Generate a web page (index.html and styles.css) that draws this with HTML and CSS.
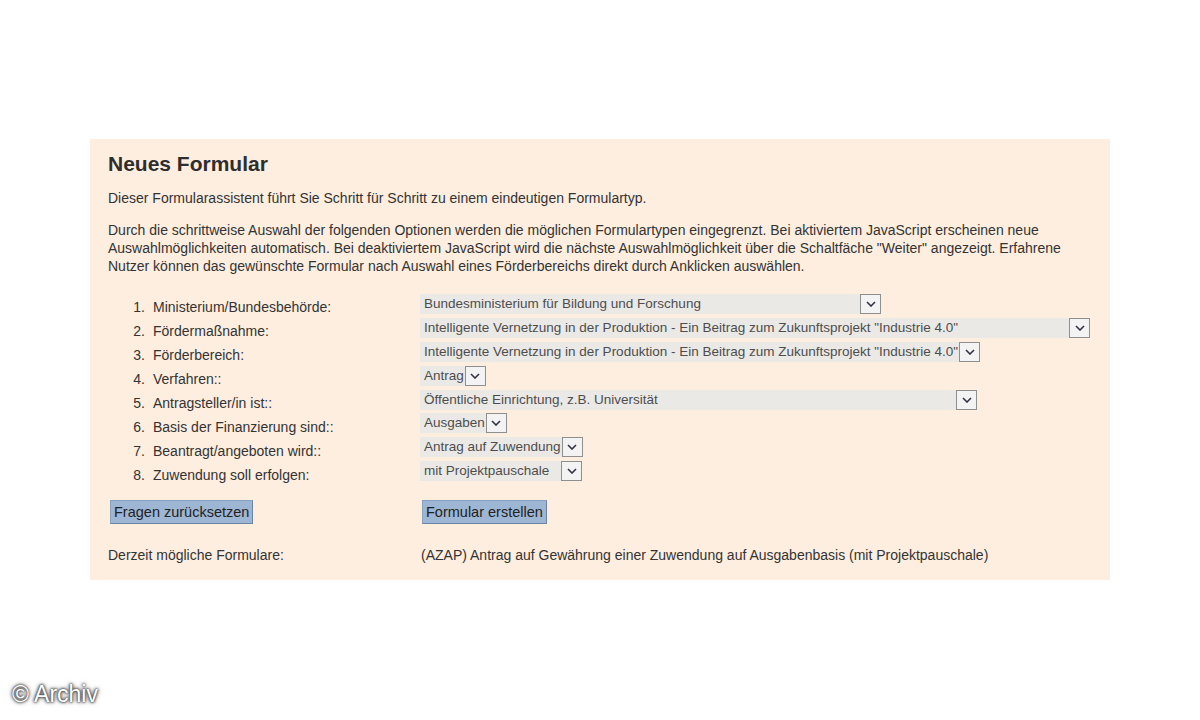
FILE: index.html
```html
<!DOCTYPE html>
<html lang="de">

<head>
    <meta charset="UTF-8" />
    <meta name="viewport" content="width=device-width, initial-scale=1.0" />
    <title>Neues Formular</title>
    <link rel="stylesheet" href="styles.css">
</head>

<body>
    <div class="panel">
        <h2>Neues Formular</h2>
        <p class="intro">Dieser Formularassistent führt Sie Schritt für Schritt zu einem eindeutigen Formulartyp.</p>
        <p class="info">Durch die schrittweise Auswahl der folgenden Optionen werden die möglichen Formulartypen eingegrenzt. Bei aktiviertem JavaScript erscheinen neue Auswahlmöglichkeiten automatisch. Bei deaktiviertem JavaScript wird die nächste Auswahlmöglichkeit über die Schaltfäche "Weiter" angezeigt. Erfahrene Nutzer können das gewünschte Formular nach Auswahl eines Förderbereichs direkt durch Anklicken auswählen.</p>

        <div class="steps">
            <div class="step">
                <span class="num">1.</span><span class="label">Ministerium/Bundesbehörde:</span>
                <span class="select w-ministry"><span class="value">Bundesministerium für Bildung und Forschung</span><span class="arrow"><svg viewBox="0 0 10 6" width="10" height="6"><path d="M1 1 L5 5 L9 1" fill="none" stroke="#334" stroke-width="1.6"/></svg></span></span>
            </div>
            <div class="step">
                <span class="num">2.</span><span class="label">Fördermaßnahme:</span>
                <span class="select w-measure"><span class="value">Intelligente Vernetzung in der Produktion - Ein Beitrag zum Zukunftsprojekt "Industrie 4.0"</span><span class="arrow"><svg viewBox="0 0 10 6" width="10" height="6"><path d="M1 1 L5 5 L9 1" fill="none" stroke="#334" stroke-width="1.6"/></svg></span></span>
            </div>
            <div class="step">
                <span class="num">3.</span><span class="label">Förderbereich:</span>
                <span class="select"><span class="value">Intelligente Vernetzung in der Produktion - Ein Beitrag zum Zukunftsprojekt "Industrie 4.0"</span><span class="arrow"><svg viewBox="0 0 10 6" width="10" height="6"><path d="M1 1 L5 5 L9 1" fill="none" stroke="#334" stroke-width="1.6"/></svg></span></span>
            </div>
            <div class="step">
                <span class="num">4.</span><span class="label">Verfahren::</span>
                <span class="select"><span class="value">Antrag</span><span class="arrow"><svg viewBox="0 0 10 6" width="10" height="6"><path d="M1 1 L5 5 L9 1" fill="none" stroke="#334" stroke-width="1.6"/></svg></span></span>
            </div>
            <div class="step">
                <span class="num">5.</span><span class="label">Antragsteller/in ist::</span>
                <span class="select w-applicant"><span class="value">Öffentliche Einrichtung, z.B. Universität</span><span class="arrow"><svg viewBox="0 0 10 6" width="10" height="6"><path d="M1 1 L5 5 L9 1" fill="none" stroke="#334" stroke-width="1.6"/></svg></span></span>
            </div>
            <div class="step">
                <span class="num">6.</span><span class="label">Basis der Finanzierung sind::</span>
                <span class="select"><span class="value">Ausgaben</span><span class="arrow"><svg viewBox="0 0 10 6" width="10" height="6"><path d="M1 1 L5 5 L9 1" fill="none" stroke="#334" stroke-width="1.6"/></svg></span></span>
            </div>
            <div class="step">
                <span class="num">7.</span><span class="label">Beantragt/angeboten wird::</span>
                <span class="select"><span class="value">Antrag auf Zuwendung</span><span class="arrow"><svg viewBox="0 0 10 6" width="10" height="6"><path d="M1 1 L5 5 L9 1" fill="none" stroke="#334" stroke-width="1.6"/></svg></span></span>
            </div>
            <div class="step">
                <span class="num">8.</span><span class="label">Zuwendung soll erfolgen:</span>
                <span class="select w-grant"><span class="value">mit Projektpauschale</span><span class="arrow"><svg viewBox="0 0 10 6" width="10" height="6"><path d="M1 1 L5 5 L9 1" fill="none" stroke="#334" stroke-width="1.6"/></svg></span></span>
            </div>
        </div>

        <div class="actions">
            <div><button class="btn">Fragen zurücksetzen</button></div>
            <div><button class="btn">Formular erstellen</button></div>
        </div>

        <div class="result">
            <span>Derzeit mögliche Formulare:</span>
            <span>(AZAP) Antrag auf Gewährung einer Zuwendung auf Ausgabenbasis (mit Projektpauschale)</span>
        </div>
    </div>

    <div class="credit">© Archiv</div>
</body>

</html>
```

FILE: styles.css
```css
body {
    margin: 0;
    background-color: #ffffff;
    font-family: "Liberation Sans", Arial, sans-serif;
    color: #333333;
    height: 720px;
    position: relative;
    overflow: hidden;
}

.panel {
    margin: 139px 0 0 90px;
    width: 1020px;
    height: 441px;
    box-sizing: border-box;
    padding: 13px 18px 0 18px;
    background-color: #fdeee0;
}

h2 {
    margin: 0;
    font-size: 21px;
    line-height: 24px;
    color: #2e2e2e;
}

.intro,
.info {
    margin: 0;
    font-size: 14px;
    line-height: 18px;
}

.intro {
    margin-top: 13px;
}

.info {
    margin-top: 14px;
}

.steps {
    margin-top: 17px;
}

.step {
    display: grid;
    grid-template-columns: 45px 267px auto;
    align-items: center;
    height: 23.9px;
    font-size: 14px;
}

.num {
    text-align: right;
    padding-right: 8px;
    padding-top: 7px;
}

.label {
    padding-top: 7px;
}

.select {
    display: inline-flex;
    justify-self: start;
    height: 20px;
    background-color: #ebe9e6;
    font-size: 13.5px;
    color: #4d4d4d;
}

.select .value {
    flex: 1;
    padding: 0 1px 0 4px;
    line-height: 20px;
    white-space: nowrap;
}

.arrow {
    display: flex;
    align-items: center;
    justify-content: center;
    width: 19px;
    height: 18px;
    border: 1px solid #8f8f8f;
    background-color: #f3f3f3;
}

.w-ministry {
    width: 461px;
}

.w-measure {
    width: 670px;
}

.w-applicant {
    width: 557px;
}

.w-grant {
    width: 162px;
}

.actions {
    display: grid;
    grid-template-columns: 312px auto;
    margin-top: 17px;
}

.btn {
    font-family: "Liberation Sans", Arial, sans-serif;
    font-size: 14.5px;
    color: #222222;
    background-color: #9db6d3;
    height: 24px;
    padding: 0 3px;
    margin-left: 2px;
    border: 1px solid #8aa2c0;
    border-right-color: #6c84a2;
    border-bottom-color: #6c84a2;
}

.result {
    display: grid;
    grid-template-columns: 313px auto;
    margin-top: 22px;
    font-size: 14px;
    line-height: 18px;
}

.credit {
    position: absolute;
    left: 12px;
    top: 681px;
    font-size: 23px;
    color: #ffffff;
    text-shadow: 0 0 2px #333, 0 0 3px #333, 0 0 5px #555;
}
```
